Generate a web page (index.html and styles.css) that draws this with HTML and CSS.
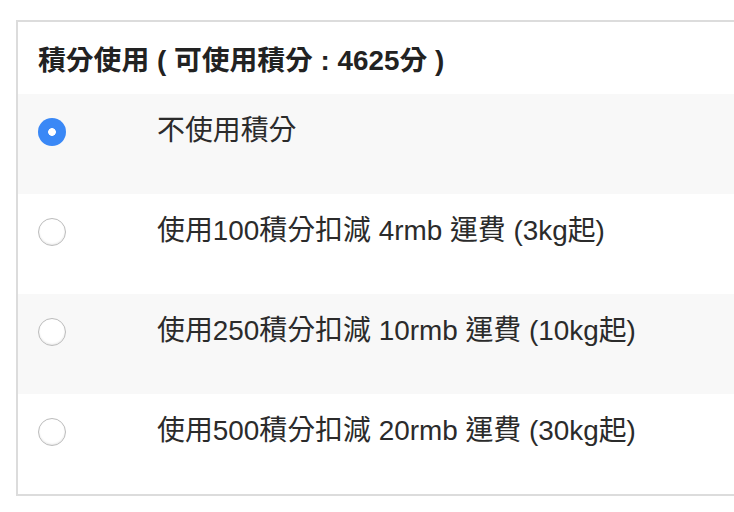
FILE: index.html
```html
<!DOCTYPE html>
<html lang="zh-Hant">
<head>
    <meta charset="UTF-8">
    <meta name="viewport" content="width=device-width, initial-scale=1.0">
    <link rel="stylesheet" href="styles.css">
</head>
<body>
    <div class="points-box">
        <div class="points-title">積分使用 ( 可使用積分 : 4625分 )</div>

        <label class="points-row">
            <input type="radio" name="points" class="radio" checked>
            <span class="option-text">不使用積分</span>
        </label>
        <label class="points-row">
            <input type="radio" name="points" class="radio">
            <span class="option-text">使用100積分扣減 4rmb 運費 (3kg起)</span>
        </label>
        <label class="points-row">
            <input type="radio" name="points" class="radio">
            <span class="option-text">使用250積分扣減 10rmb 運費 (10kg起)</span>
        </label>
        <label class="points-row">
            <input type="radio" name="points" class="radio">
            <span class="option-text">使用500積分扣減 20rmb 運費 (30kg起)</span>
        </label>
    </div>
</body>
</html>
```

FILE: styles.css
```css
html, body {
    margin: 0;
    overflow: hidden;
    background: #fff;
}

body {
    font-family: "Liberation Sans", "Noto Sans CJK TC", sans-serif;
    color: #333;
}

.points-box {
    margin: 20px 0 0 16px;
    width: 760px;
    border: 2px solid #dcdcdc;
}

.points-title {
    height: 72px;
    display: flex;
    align-items: center;
    padding-left: 20px;
    font-size: 27.8px;
    font-weight: bold;
    color: #222;
}

.points-row {
    display: flex;
    align-items: flex-start;
    height: 100px;
    box-sizing: border-box;
    padding: 20px 0 0 20px;
    cursor: pointer;
}

/* every other row gets the grey stripe */
.points-row:nth-of-type(odd) {
    background: #f8f8f8;
}

.radio {
    appearance: none;
    -webkit-appearance: none;
    margin: 4px 91px 0 0;
    width: 28px;
    height: 28px;
    flex: none;
    border-radius: 50%;
    border: 1px solid #bcbcbc;
    background: #fff;
    box-shadow: inset 0 -1px 2px rgba(0, 0, 0, 0.1);
    box-sizing: border-box;
}

.radio:checked {
    border: none;
    background: radial-gradient(circle, #fff 0 3.5px, #3a88f6 4.2px);
    box-shadow: none;
}

.option-text {
    font-size: 27.9px;
    line-height: 34px;
    color: #2b2b2b;
}
```
